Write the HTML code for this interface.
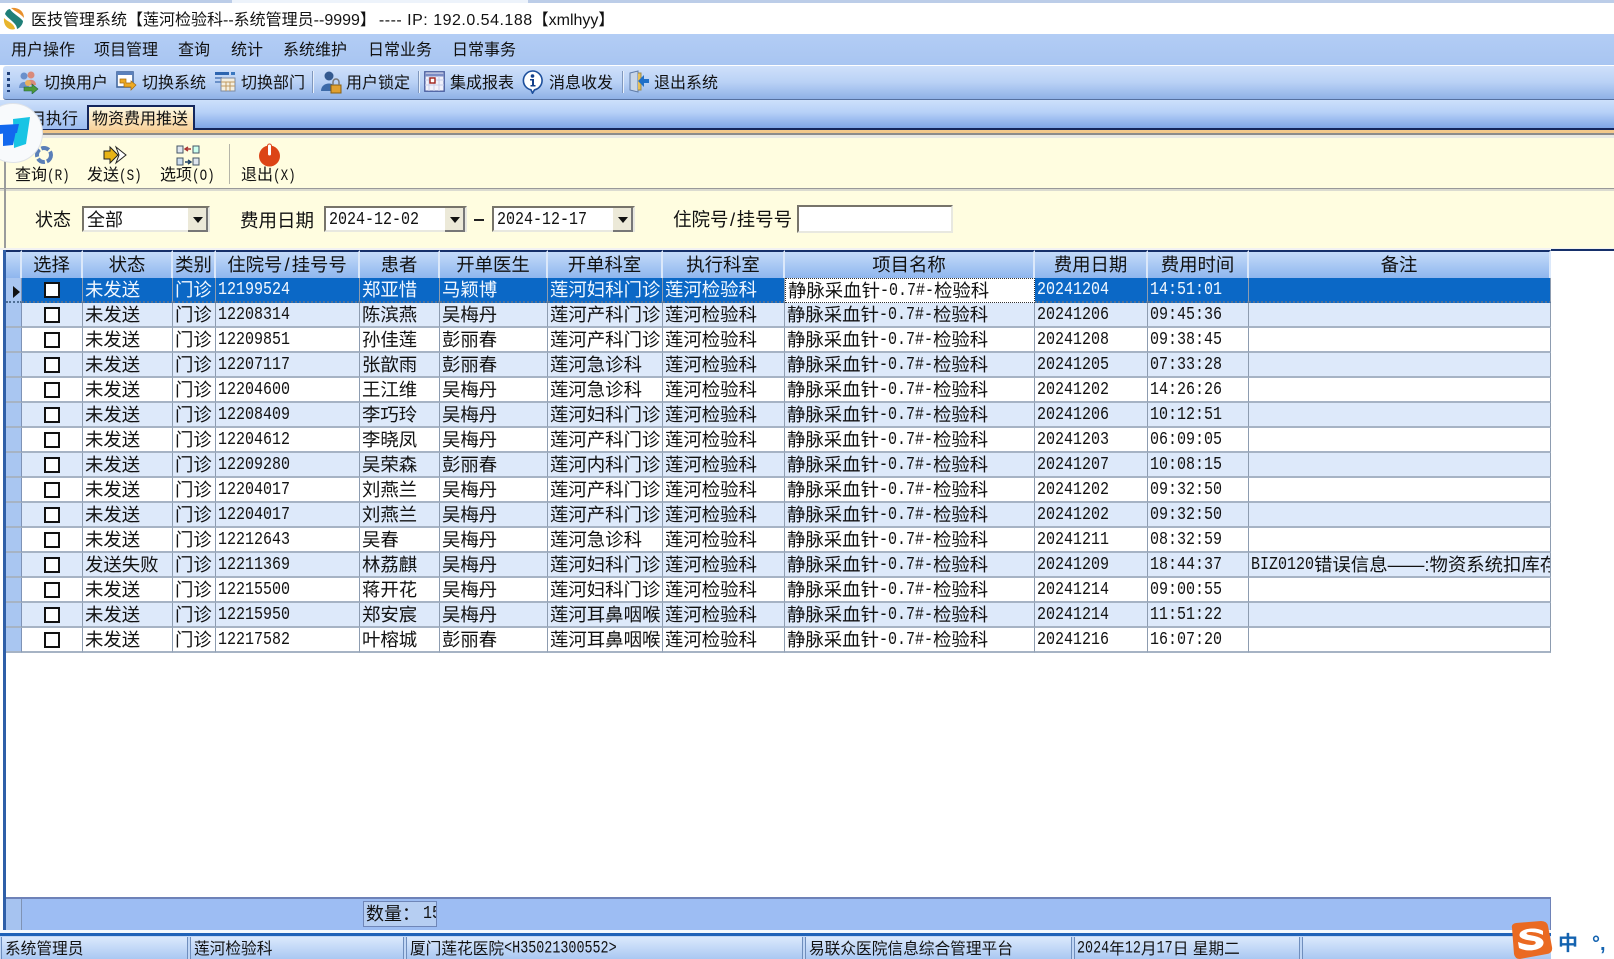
<!DOCTYPE html>
<html lang="zh"><head><meta charset="utf-8"><title>医技管理系统</title>
<style>
html,body{margin:0;padding:0;background:#fff}
#w{position:relative;width:1614px;height:959px;overflow:hidden;background:#fff;font-family:"Liberation Sans","Noto Sans CJK SC",sans-serif;color:#111;font-size:16px;filter:blur(.35px)}
.a{position:absolute}
.t{position:absolute;white-space:nowrap;line-height:22px;font-size:16px}
.m{font-family:"Liberation Mono",monospace;font-size:15px;display:inline-block;transform:scaleY(1.25);vertical-align:top}
.s{font-family:"Liberation Mono",monospace;font-size:13.4px;display:inline-block;transform:scaleY(1.3);vertical-align:top}
table{position:absolute;left:6px;top:250px;border-collapse:separate;border-spacing:0;table-layout:fixed;width:1545px}
th{padding:0;font-weight:normal;font-size:18.4px;line-height:26px;background:linear-gradient(#c4dbf9,#8fb6ee);border-right:2px solid #dbe8fa;border-top:2px solid #16306a;box-sizing:border-box;height:27px;white-space:nowrap;overflow:hidden;color:#111}
td{height:25px;box-sizing:border-box;padding:0 0 0 2px;font-size:18.4px;line-height:23px;border-right:1px solid #8d9cb0;border-bottom:2px solid #a6b3c4;white-space:nowrap;overflow:hidden;color:#111}
td>*{line-height:23px}
tr.o td{background:#dde9fa}
tr.e td{background:#fff}
td.h{background:#a9c6f1!important;padding:0;border-right:1px solid #7f93b5}
td.c{padding:0;text-align:center}
.b{display:block;width:12px;height:12px;border:2px solid #111;background:#fff;margin:1px auto 0;line-height:0}
tr.x td{background:#0b68c6;color:#f2f8ff;border-bottom:2px dotted #4f6f95}
tr.x td.n{background:#fff;color:#111;border:1px dotted #333}
tr.x td.h{background:#a9c6f1}
.i{position:absolute;box-sizing:border-box;background:#fff;border:2px solid #77746a;border-right-color:#e8e8e0;border-bottom-color:#e8e8e0;height:26px}
.d{position:absolute;right:0;top:0;width:20px;height:24px;background:#ece9d8;border-right:2px solid #777;border-bottom:2px solid #777;box-sizing:border-box}
.d:after{content:"";position:absolute;left:5px;top:9px;border:5px solid transparent;border-top:6px solid #111}
.p{position:absolute;top:937px;height:22px;box-sizing:border-box;background:linear-gradient(#dbe9fc,#aac8f2);border-left:1px solid #6f8ebd;border-right:1px solid #6f8ebd}
.p .t{font-size:15.7px}
.sp{position:absolute;width:1px;background:#7f97bd;border-right:1px solid #e8f0fb}
</style></head><body><div id="w">

<div class="a" style="left:0;top:0;width:1614px;height:3px;background:#bccde8"></div>
<div class="a" style="left:232px;top:0;width:296px;height:3px;background:#edf3fb"></div>
<svg class="a" style="left:3px;top:7px" width="22" height="24" viewBox="0 0 22 24"><path d="M8 1C14 0 21 3 21 11 18 7 13 5 8 1z" fill="#e8902c"/><path d="M2 7C3 4 5 2 7 2 10 7 16 9 20 14 20 17 17 21 14 22 14 16 6 13 2 7z" fill="#1f7f78"/><path d="M1 11C5 15 11 16 12 22 6 24 0 19 1 11z" fill="#e8b52c"/></svg>
<div class="t" style="left:31px;top:10px">医技管理系统【莲河检验科--系统管理员--9999】<span style="letter-spacing:.5px;margin-left:3px">---- IP: 192.0.54.188</span>【xmlhyy】</div>

<div class="a" style="left:0;top:34px;width:1614px;height:31px;background:linear-gradient(#b3cdf5,#a8c5f1)"></div>
<div class="t" style="left:11px;top:40px">用户操作</div>
<div class="t" style="left:94px;top:40px">项目管理</div>
<div class="t" style="left:178px;top:40px">查询</div>
<div class="t" style="left:231px;top:40px">统计</div>
<div class="t" style="left:283px;top:40px">系统维护</div>
<div class="t" style="left:368px;top:40px">日常业务</div>
<div class="t" style="left:452px;top:40px">日常事务</div>

<div class="a" style="left:3px;top:66px;width:1611px;height:34px;background:linear-gradient(#cfe0fa,#b9d1f5 50%,#8fb1e6);border-bottom:1px solid #55709f;box-sizing:border-box;border-radius:3px 0 0 3px"></div>
<div class="a" style="left:7px;top:72px;width:3px;height:20px;background:repeating-linear-gradient(#20407a 0 3px,transparent 3px 6px)"></div>
<svg class="a" style="left:16px;top:70px" width="24" height="24" viewBox="0 0 24 24"><circle cx="8" cy="6" r="3.5" fill="#6a90cc"/><circle cx="15" cy="5" r="3.5" fill="#d98a7a"/><path d="M3 18C3 10 13 10 13 18z" fill="#6a90cc"/><path d="M10 15C10 8 20 8 20 15z" fill="#d98a7a"/><path d="M8 17h8v-3l6 5-6 5v-3H8z" fill="#4e9a3a" stroke="#264" stroke-width=".6"/><circle cx="12" cy="13" r="3" fill="#e8b060"/></svg>
<div class="t" style="left:44px;top:73px">切换用户</div>
<svg class="a" style="left:116px;top:71px" width="22" height="22" viewBox="0 0 22 22"><rect x="1" y="1" width="16" height="15" fill="#fff" stroke="#44689e" stroke-width="1.6"/><rect x="1" y="1" width="16" height="3" fill="#5a80bc"/><path d="M4 8h6v4h5v-2l5 4-5 5v-3H8v-4H4z" fill="#eeaa22" stroke="#a56a10" stroke-width=".7"/></svg>
<div class="t" style="left:142px;top:73px">切换系统</div>
<svg class="a" style="left:214px;top:71px" width="22" height="22" viewBox="0 0 22 22"><rect x="1" y="1" width="14" height="3" fill="#2d65b0"/><rect x="1" y="6" width="7" height="2" fill="#6a90c8"/><rect x="1" y="10" width="7" height="2" fill="#6a90c8"/><rect x="17" y="1" width="4" height="3" fill="#3a78c0"/><rect x="7" y="7" width="14" height="13" fill="#f4efe0" stroke="#7d8aa0"/><path d="M7 11h14M12 11v9M16 11v9M7 15h14" stroke="#c09a60"/></svg>
<div class="t" style="left:241px;top:73px">切换部门</div>
<div class="sp" style="left:312px;top:71px;height:22px"></div>
<svg class="a" style="left:320px;top:70px" width="22" height="24" viewBox="0 0 22 24"><circle cx="9" cy="6" r="4.5" fill="#33598f"/><path d="M1 21C1 11 17 11 17 21z" fill="#3c6aa8"/><rect x="11" y="15" width="10" height="8" fill="#e0a030" stroke="#8a6010"/><path d="M13 15v-3a3 3 0 0 1 6 0v3" fill="none" stroke="#777" stroke-width="1.5"/></svg>
<div class="t" style="left:346px;top:73px">用户锁定</div>
<div class="sp" style="left:418px;top:71px;height:22px"></div>
<svg class="a" style="left:424px;top:71px" width="21" height="21" viewBox="0 0 21 21"><rect x=".8" y=".8" width="19.4" height="19.4" fill="#f1f1fb" stroke="#4c5fa0" stroke-width="1.4"/><path d="M1 4h19" stroke="#7b8cc4" stroke-width="3"/><path d="M5 5v15M10 5v15M15 5v15M1 9h19M1 14h19" stroke="#c6cdea"/><rect x="6" y="7" width="5" height="5" fill="#fff" stroke="#a0201a" stroke-width="1.4"/></svg>
<div class="t" style="left:450px;top:73px">集成报表</div>
<svg class="a" style="left:522px;top:70px" width="21" height="24" viewBox="0 0 21 24"><path d="M10.5 1a9.5 9.5 0 0 1 2 18.8l-2 3.4-1.5-3.4A9.5 9.5 0 0 1 10.5 1z" fill="#fff" stroke="#1d4f9c" stroke-width="1.6"/><circle cx="10.5" cy="6" r="1.8" fill="#123f8a"/><path d="M8 9h4v6h1.5v1.5h-5V15H10v-4.5H8z" fill="#123f8a"/></svg>
<div class="t" style="left:549px;top:73px">消息收发</div>
<div class="sp" style="left:622px;top:71px;height:22px"></div>
<svg class="a" style="left:628px;top:70px" width="22" height="24" viewBox="0 0 22 24"><path d="M2 3l8-2v21l-8-2z" fill="#c9d6e8" stroke="#5f7ba6"/><path d="M10 3h3v17h-3" fill="#e8c058" stroke="#9a8a50"/><path d="M21 9h-5V5l-6 6 6 6v-4h5z" fill="#1f6fc8"/></svg>
<div class="t" style="left:654px;top:73px">退出系统</div>

<div class="a" style="left:0;top:100px;width:1614px;height:30px;background:linear-gradient(#cde0fb,#b6d0f7 45%,#7fa6e6);border-bottom:2px solid #14265c;box-sizing:border-box"></div>
<div class="a" style="left:14px;top:105px;width:73px;height:24px;background:linear-gradient(#c4d9f8,#9cbcef)"></div>
<div class="t" style="left:14px;top:109px">项目执行</div>
<div class="a" style="left:87px;top:105px;width:108px;height:26px;box-sizing:border-box;background:linear-gradient(#fdf9e2,#f7cf97);border:2px solid #14265c;border-bottom:0"></div>
<div class="t" style="left:92px;top:109px">物资费用推送</div>
<div class="a" style="left:0;top:130px;width:1614px;height:3px;background:#f3c98c"></div>
<div class="a" style="left:0;top:133px;width:1614px;height:2px;background:#8c8c8c"></div>
<div class="a" style="left:0;top:135px;width:1614px;height:3px;background:#e9e9e4"></div>
<div class="a" style="left:0;top:138px;width:1614px;height:50px;background:#fffde0"></div>
<div class="a" style="left:0;top:188px;width:1614px;height:1px;background:#999"></div>
<div class="a" style="left:0;top:189px;width:1614px;height:2px;background:#dbdbd0"></div>
<div class="a" style="left:0;top:191px;width:1614px;height:57px;background:#fffde0"></div>
<div class="a" style="left:4px;top:133px;width:2px;height:117px;background:#9a9c9c"></div>

<svg class="a" style="left:33px;top:144px" width="22" height="22" viewBox="0 0 22 22"><circle cx="11" cy="11" r="7" fill="none" stroke="#5a7fb8" stroke-width="4" stroke-dasharray="8 2"/></svg>
<svg class="a" style="left:103px;top:145px" width="24" height="20" viewBox="0 0 24 20"><path d="M1 6h6V2l8 8-8 8v-4H1z" fill="#e8b416" stroke="#222"/><path d="M13 2l10 8-10 8 3-8z" fill="#fff" stroke="#222"/></svg>
<svg class="a" style="left:176px;top:145px" width="24" height="22" viewBox="0 0 24 22"><rect x="1" y="1" width="6" height="7" fill="#dfe6ef" stroke="#456"/><rect x="17" y="1" width="6" height="7" fill="#cfe" stroke="#456"/><rect x="1" y="13" width="6" height="7" fill="#cde" stroke="#456"/><rect x="17" y="13" width="6" height="7" fill="#dfe6ef" stroke="#456"/><path d="M15 4H10M12 2l-3 2 3 2" fill="none" stroke="#a33" stroke-width="1.4"/><path d="M9 17h5M12 15l3 2-3 2" fill="none" stroke="#246" stroke-width="1.4"/></svg>
<svg class="a" style="left:258px;top:143px" width="23" height="24" viewBox="0 0 23 24"><circle cx="11.5" cy="13" r="10.5" fill="#dc4416"/><rect x="9.5" y="1" width="4" height="12" rx="2" fill="#fff" stroke="#dc4416"/></svg>

<div class="t" style="left:15px;top:165px">查询<span class="m" style="font-size:12.6px">(R)</span></div>
<div class="t" style="left:87px;top:165px">发送<span class="m" style="font-size:12.6px">(S)</span></div>
<div class="t" style="left:160px;top:165px">选项<span class="m" style="font-size:12.6px">(O)</span></div>
<div class="a" style="left:229px;top:144px;width:1px;height:40px;background:#b5b5a8"></div>
<div class="t" style="left:241px;top:165px">退出<span class="m" style="font-size:12.6px">(X)</span></div>

<div class="t" style="left:35px;top:209px;font-size:18px">状态</div>
<div class="i" style="left:82px;top:206px;width:128px"><div class="d"></div><div class="t" style="left:3px;top:1px;font-size:18px">全部</div></div>
<div class="t" style="left:240px;top:210px;font-size:18.5px">费用日期</div>
<div class="i" style="left:324px;top:206px;width:143px"><div class="d"></div><div class="t" style="left:3px;top:1px"><span class="m">2024-12-02</span></div></div>
<div class="a" style="left:474px;top:219px;width:10px;height:2px;background:#222"></div>
<div class="i" style="left:492px;top:206px;width:143px"><div class="d"></div><div class="t" style="left:3px;top:1px"><span class="m">2024-12-17</span></div></div>
<div class="t" style="left:673px;top:209px;font-size:18.5px">住院号<span style="margin:0 1.5px">/</span>挂号号</div>
<div class="i" style="left:797px;top:205px;width:156px;height:28px"></div>

<div class="a" style="left:0;top:248px;width:1614px;height:2px;background:#f2f2f2"></div>
<div class="a" style="left:1551px;top:249px;width:63px;height:2px;background:#16306a"></div>

<table>
<colgroup><col style="width:16px"><col style="width:61px"><col style="width:90px"><col style="width:43px"><col style="width:144px"><col style="width:80px"><col style="width:108px"><col style="width:115px"><col style="width:122px"><col style="width:250px"><col style="width:113px"><col style="width:101px"><col style="width:302px"></colgroup>
<tr><th></th><th>选择</th><th>状态</th><th>类别</th><th>住院号<span style="margin:0 2px">/</span>挂号号</th><th>患者</th><th>开单医生</th><th>开单科室</th><th>执行科室</th><th>项目名称</th><th>费用日期</th><th>费用时间</th><th>备注</th></tr>
<tr class="x"><td class="h"><svg width="14" height="14" viewBox="0 0 14 14" style="display:block;margin-left:4px;margin-top:4px"><path d="M3 1l7 6-7 6z" fill="#111"/></svg></td><td class="c"><span class="b"></span></td><td>未发送</td><td>门诊</td><td><span class="m">12199524</span></td><td>郑亚惜</td><td>马颖博</td><td>莲河妇科门诊</td><td>莲河检验科</td><td class="n">静脉采血针<span class="m">-0.7#-</span>检验科</td><td><span class="m">20241204</span></td><td><span class="m">14:51:01</span></td><td></td></tr>
<tr class="o"><td class="h"></td><td class="c"><span class="b"></span></td><td>未发送</td><td>门诊</td><td><span class="m">12208314</span></td><td>陈滨燕</td><td>吴梅丹</td><td>莲河产科门诊</td><td>莲河检验科</td><td>静脉采血针<span class="m">-0.7#-</span>检验科</td><td><span class="m">20241206</span></td><td><span class="m">09:45:36</span></td><td></td></tr>
<tr class="e"><td class="h"></td><td class="c"><span class="b"></span></td><td>未发送</td><td>门诊</td><td><span class="m">12209851</span></td><td>孙佳莲</td><td>彭丽春</td><td>莲河产科门诊</td><td>莲河检验科</td><td>静脉采血针<span class="m">-0.7#-</span>检验科</td><td><span class="m">20241208</span></td><td><span class="m">09:38:45</span></td><td></td></tr>
<tr class="o"><td class="h"></td><td class="c"><span class="b"></span></td><td>未发送</td><td>门诊</td><td><span class="m">12207117</span></td><td>张歆雨</td><td>彭丽春</td><td>莲河急诊科</td><td>莲河检验科</td><td>静脉采血针<span class="m">-0.7#-</span>检验科</td><td><span class="m">20241205</span></td><td><span class="m">07:33:28</span></td><td></td></tr>
<tr class="e"><td class="h"></td><td class="c"><span class="b"></span></td><td>未发送</td><td>门诊</td><td><span class="m">12204600</span></td><td>王江维</td><td>吴梅丹</td><td>莲河急诊科</td><td>莲河检验科</td><td>静脉采血针<span class="m">-0.7#-</span>检验科</td><td><span class="m">20241202</span></td><td><span class="m">14:26:26</span></td><td></td></tr>
<tr class="o"><td class="h"></td><td class="c"><span class="b"></span></td><td>未发送</td><td>门诊</td><td><span class="m">12208409</span></td><td>李巧玲</td><td>吴梅丹</td><td>莲河妇科门诊</td><td>莲河检验科</td><td>静脉采血针<span class="m">-0.7#-</span>检验科</td><td><span class="m">20241206</span></td><td><span class="m">10:12:51</span></td><td></td></tr>
<tr class="e"><td class="h"></td><td class="c"><span class="b"></span></td><td>未发送</td><td>门诊</td><td><span class="m">12204612</span></td><td>李晓凤</td><td>吴梅丹</td><td>莲河产科门诊</td><td>莲河检验科</td><td>静脉采血针<span class="m">-0.7#-</span>检验科</td><td><span class="m">20241203</span></td><td><span class="m">06:09:05</span></td><td></td></tr>
<tr class="o"><td class="h"></td><td class="c"><span class="b"></span></td><td>未发送</td><td>门诊</td><td><span class="m">12209280</span></td><td>吴荣森</td><td>彭丽春</td><td>莲河内科门诊</td><td>莲河检验科</td><td>静脉采血针<span class="m">-0.7#-</span>检验科</td><td><span class="m">20241207</span></td><td><span class="m">10:08:15</span></td><td></td></tr>
<tr class="e"><td class="h"></td><td class="c"><span class="b"></span></td><td>未发送</td><td>门诊</td><td><span class="m">12204017</span></td><td>刘燕兰</td><td>吴梅丹</td><td>莲河产科门诊</td><td>莲河检验科</td><td>静脉采血针<span class="m">-0.7#-</span>检验科</td><td><span class="m">20241202</span></td><td><span class="m">09:32:50</span></td><td></td></tr>
<tr class="o"><td class="h"></td><td class="c"><span class="b"></span></td><td>未发送</td><td>门诊</td><td><span class="m">12204017</span></td><td>刘燕兰</td><td>吴梅丹</td><td>莲河产科门诊</td><td>莲河检验科</td><td>静脉采血针<span class="m">-0.7#-</span>检验科</td><td><span class="m">20241202</span></td><td><span class="m">09:32:50</span></td><td></td></tr>
<tr class="e"><td class="h"></td><td class="c"><span class="b"></span></td><td>未发送</td><td>门诊</td><td><span class="m">12212643</span></td><td>吴春</td><td>吴梅丹</td><td>莲河急诊科</td><td>莲河检验科</td><td>静脉采血针<span class="m">-0.7#-</span>检验科</td><td><span class="m">20241211</span></td><td><span class="m">08:32:59</span></td><td></td></tr>
<tr class="o"><td class="h"></td><td class="c"><span class="b"></span></td><td>发送失败</td><td>门诊</td><td><span class="m">12211369</span></td><td>林荔麒</td><td>吴梅丹</td><td>莲河妇科门诊</td><td>莲河检验科</td><td>静脉采血针<span class="m">-0.7#-</span>检验科</td><td><span class="m">20241209</span></td><td><span class="m">18:44:37</span></td><td><span class="m">BIZ0120</span>错误信息——:物资系统扣库存</td></tr>
<tr class="e"><td class="h"></td><td class="c"><span class="b"></span></td><td>未发送</td><td>门诊</td><td><span class="m">12215500</span></td><td>蒋开花</td><td>吴梅丹</td><td>莲河妇科门诊</td><td>莲河检验科</td><td>静脉采血针<span class="m">-0.7#-</span>检验科</td><td><span class="m">20241214</span></td><td><span class="m">09:00:55</span></td><td></td></tr>
<tr class="o"><td class="h"></td><td class="c"><span class="b"></span></td><td>未发送</td><td>门诊</td><td><span class="m">12215950</span></td><td>郑安宸</td><td>吴梅丹</td><td>莲河耳鼻咽喉</td><td>莲河检验科</td><td>静脉采血针<span class="m">-0.7#-</span>检验科</td><td><span class="m">20241214</span></td><td><span class="m">11:51:22</span></td><td></td></tr>
<tr class="e"><td class="h"></td><td class="c"><span class="b"></span></td><td>未发送</td><td>门诊</td><td><span class="m">12217582</span></td><td>叶榕城</td><td>彭丽春</td><td>莲河耳鼻咽喉</td><td>莲河检验科</td><td>静脉采血针<span class="m">-0.7#-</span>检验科</td><td><span class="m">20241216</span></td><td><span class="m">16:07:20</span></td><td></td></tr>
</table>

<div class="a" style="left:3px;top:250px;width:3px;height:683px;background:#2f5fa8"></div>
<div class="a" style="left:6px;top:897px;width:1545px;height:33px;box-sizing:border-box;background:#9dbdf3;border-top:2px solid #6e82b8;border-right:1px solid #6e82b8"></div>
<div class="a" style="left:6px;top:899px;width:16px;height:31px;box-sizing:border-box;background:#a6c3f0;border-right:1px solid #7f93b5"></div>
<div class="a" style="left:363px;top:901px;width:74px;height:26px;box-sizing:border-box;background:#b6cef2;border:1px solid #6f86b8;overflow:hidden"><div class="t" style="left:2px;top:1px;font-size:18px;line-height:22px">数量：<span class="m" style="margin-left:3px">15</span></div></div>
<div class="a" style="left:0;top:930px;width:1614px;height:3px;background:#f4f8fd"></div>
<div class="a" style="left:0;top:933px;width:1614px;height:3px;background:#1f62b8"></div>
<div class="a" style="left:0;top:936px;width:1614px;height:23px;background:#c0d6f5"></div>
<div class="p" style="left:1px;width:187px"><div class="t" style="left:3px;top:2px">系统管理员</div></div>
<div class="p" style="left:190px;width:214px"><div class="t" style="left:3px;top:2px">莲河检验科</div></div>
<div class="p" style="left:406px;width:397px"><div class="t" style="left:3px;top:2px">厦门莲花医院<span class="s">&lt;H35021300552&gt;</span></div></div>
<div class="p" style="left:805px;width:267px"><div class="t" style="left:3px;top:2px">易联众医院信息综合管理平台</div></div>
<div class="p" style="left:1074px;width:226px"><div class="t" style="left:2px;top:2px"><span class="s">2024</span>年<span class="s">12</span>月<span class="s">17</span>日 星期二</div></div>
<div class="p" style="left:1302px;width:312px"></div>

<div class="a" style="left:1551px;top:929px;width:63px;height:30px;background:#fff"></div>
<svg class="a" style="left:1509px;top:921px" width="44" height="38" viewBox="0 0 44 38"><path d="M3 7Q2 3 7 2L32 0Q38 0 39 5L43 26Q44 32 38 33L11 38Q6 38 5 33z" fill="#ea6a22"/><path d="M34 10C28 6 14 7 11 12 8 18 18 19 25 20 28 21 27 24 23 24 19 24 14 23 9 21L10 27C17 31 31 30 34 24 37 17 27 15 20 14 16 13 17 11 21 11 26 11 30 12 34 14z" fill="#fff"/></svg>
<div class="t" style="left:1558px;top:933px;font-size:20px;font-weight:bold;color:#1463b0">中</div>
<div class="t" style="left:1592px;top:933px;font-size:20px;font-weight:bold;color:#1463b0">°,</div>

<div class="a" style="left:-17px;top:103px;width:60px;height:60px;border-radius:50%;background:#f8fafc;border:1px solid #dfe3e8;box-sizing:border-box"></div>
<svg class="a" style="left:0;top:115px" width="32" height="36" viewBox="0 0 32 36"><path d="M13 4L30 2 26 29 14 33z" fill="#18c4e4"/><path d="M0 10L19 9 17 18H6L0 19z" fill="#1268ee"/><path d="M3 16h13l-3 14-10 1z" fill="#1268ee"/></svg>

</div></body></html>
